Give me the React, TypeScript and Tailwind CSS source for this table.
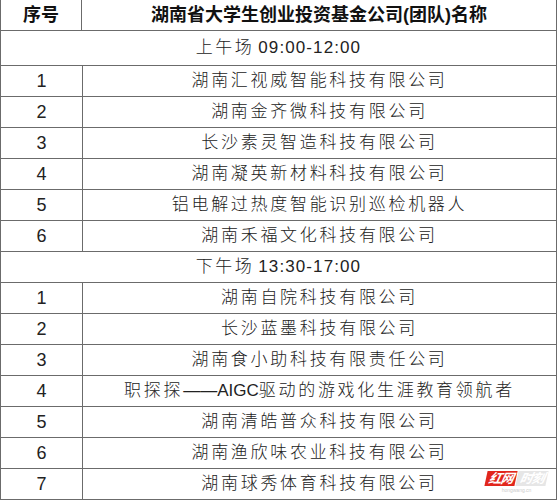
import React from "react";

const morning = [
  "湖南汇视威智能科技有限公司",
  "湖南金齐微科技有限公司",
  "长沙素灵智造科技有限公司",
  "湖南凝英新材料科技有限公司",
  "铝电解过热度智能识别巡检机器人",
  "湖南禾福文化科技有限公司",
];
const afternoon: React.ReactNode[] = [
  "湖南自院科技有限公司",
  "长沙蓝墨科技有限公司",
  "湖南食小助科技有限责任公司",
  <>
    职探探<span className="tracking-[0px]">——AIGC</span>驱动的游戏化生涯教育领航者
  </>,
  "湖南清皓普众科技有限公司",
  "湖南渔欣味农业科技有限公司",
  "湖南球秀体育科技有限公司",
];

const font = { fontFamily: '"Liberation Sans", "Noto Sans CJK SC", sans-serif' };

function Row({ n, name }: { n: number; name: React.ReactNode }) {
  return (
    <div className="flex h-[31px] border-b border-[#6b6b6b]">
      <div className="w-[82px] shrink-0 border-r border-[#6b6b6b] flex items-center justify-center text-[18px] font-light text-[#222]">
        {n}
      </div>
      <div className="flex-1 flex items-center justify-center text-[17px] font-light tracking-[2.7px] text-[#222] whitespace-nowrap">
        {name}
      </div>
    </div>
  );
}

function Section({ label, time, h }: { label: string; time: string; h: string }) {
  return (
    <div className={`flex ${h} items-center justify-center border-b border-[#6b6b6b] text-[17px] font-light text-[#222] whitespace-nowrap`}>
      <span className="tracking-[2.5px]">{label}</span>
      <span className="tracking-[1.1px] ml-[4px]">{time}</span>
    </div>
  );
}

export default function App() {
  return (
    <div className="relative w-[557px] h-[500px] bg-white overflow-hidden" style={font}>
      <div className="w-[557px] border-l border-r border-[#6b6b6b]">
        <div className="flex h-[31px] border-b border-[#6b6b6b]">
          <div className="w-[81px] shrink-0 border-r border-[#6b6b6b] flex items-center justify-center text-[18px] font-bold text-[#111]">
            序号
          </div>
          <div className="flex-1 flex items-center justify-center text-[18px] font-bold text-[#111] whitespace-nowrap">
            湖南省大学生创业投资基金公司(团队)名称
          </div>
        </div>
        <Section label="上午场" time="09:00-12:00" h="h-[35px]" />
        {morning.map((m, i) => (
          <Row key={"m" + i} n={i + 1} name={m} />
        ))}
        <Section label="下午场" time="13:30-17:00" h="h-[31px]" />
        {afternoon.map((m, i) => (
          <Row key={"a" + i} n={i + 1} name={m} />
        ))}
      </div>
      <div className="absolute left-[486px] top-[471px] flex flex-col items-center">
        <div className="flex items-center">
          <div className="bg-[#e1261c] px-[3px] h-[15px] flex items-center -skew-x-12">
            <span className="text-white text-[13px] font-bold italic leading-none tracking-[-1px]">红网</span>
          </div>
          <div className="bg-[#e6e6e6] ml-[1px] px-[3px] h-[15px] flex items-center -skew-x-12">
            <span className="text-white text-[13px] font-bold italic leading-none tracking-[-1px]">时刻</span>
          </div>
        </div>
        <span className="text-[5px] text-[#ccc] leading-none mt-[2px]">hongwang.cn</span>
      </div>
    </div>
  );
}
